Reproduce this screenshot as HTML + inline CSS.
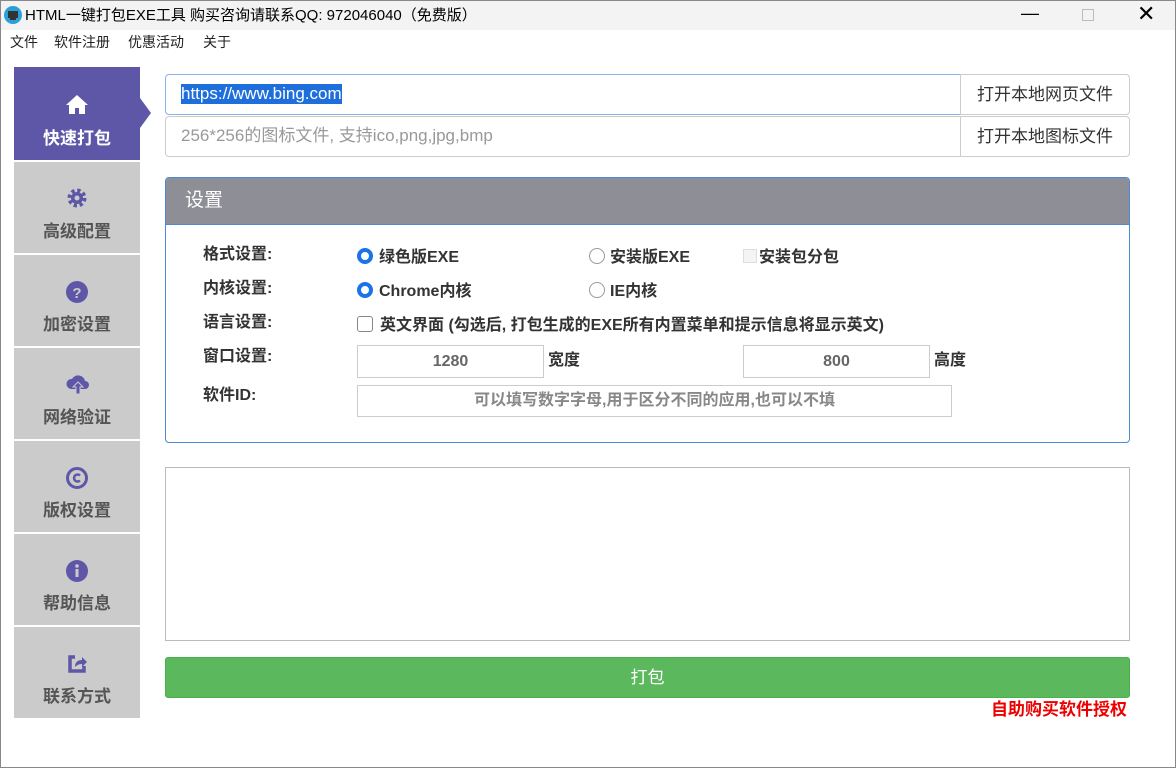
<!DOCTYPE html>
<html><head><meta charset="utf-8"><style>
*{box-sizing:border-box;margin:0;padding:0}
body{width:1176px;height:768px;background:#fff;font-family:"Liberation Sans","Noto Sans CJK SC",sans-serif;position:relative;overflow:hidden;line-height:20px}
.a{position:absolute}
.title{left:0;top:0;width:1176px;height:30px;background:#f3f3f3;font-size:15px;color:#000}
.menu{top:32px;font-size:14px;color:#222}
.side{left:14px;width:126px;background:#cbcbcb;text-align:center;color:#555;font-weight:bold;font-size:17px}
.side .lab{position:absolute;left:0;right:0;bottom:11px}
.side svg{position:absolute;left:51px;top:25px}
.inp{border:1px solid #ccc;background:#fff}
.btn{border:1px solid #ccc;background:#fff;font-size:17px;color:#333;text-align:center;line-height:40px}
.lbl{font-size:16px;font-weight:bold;color:#333}
.radio{width:16px;height:16px;border-radius:50%;border:1px solid #999;background:#fff}
.radio.on{border:4px solid #1a73e8;background:#fff}
.opt{font-size:16px;font-weight:bold;color:#333}
</style></head><body>
<div class="a" style="left:0;top:0;width:1176px;height:768px;border:1px solid #888;z-index:5;pointer-events:none"></div>
<div class="a title">
<svg class="a" style="left:4px;top:6px" width="18" height="18"><circle cx="9" cy="9" r="9" fill="#2a9fd8"/><rect x="4" y="5" width="10" height="7" fill="#333"/><rect x="6" y="12" width="6" height="2" fill="#333"/></svg>
<span class="a" style="left:25px;top:6px">HTML一键打包EXE工具 购买咨询请联系QQ: 972046040（免费版）</span>
<span class="a" style="left:1021px;top:3px;font-size:18px">—</span>
<div class="a" style="left:1082px;top:9px;width:12px;height:12px;border:1px solid #bbb"></div>
<span class="a" style="left:1137px;top:4px;font-size:22px;font-weight:300">✕</span>
</div>
<span class="a menu" style="left:10px">文件</span>
<span class="a menu" style="left:54px">软件注册</span>
<span class="a menu" style="left:128px">优惠活动</span>
<span class="a menu" style="left:203px">关于</span>

<div class="a side" style="top:67px;height:93px;background:#5e57a8;color:#fff">
<svg width="24" height="24" viewBox="0 0 24 24" style="top:26px"><path d="M12 2L1 12h3v9h6v-6h4v6h6v-9h3z" fill="#fff"/></svg>
<div class="lab">快速打包</div></div>
<div class="a" style="left:140px;top:98px;width:0;height:0;border-top:15px solid transparent;border-bottom:15px solid transparent;border-left:11px solid #5e57a8"></div>

<div class="a side" style="top:162px;height:91px"><svg width="24" height="24" viewBox="0 0 24 24" style="top:24px"><circle cx="12" cy="12" r="7" fill="none" stroke="#5e57a8" stroke-width="5" stroke-dasharray="3 2.5"/><circle cx="12" cy="12" r="6" fill="#5e57a8"/><circle cx="12" cy="12" r="2.5" fill="#cbcbcb"/></svg><div class="lab">高级配置</div></div>
<div class="a side" style="top:255px;height:91px"><svg width="24" height="24" viewBox="0 0 24 24"><circle cx="12" cy="12" r="11" fill="#5e57a8"/><text x="12" y="18" font-size="15" font-weight="bold" fill="#cbcbcb" text-anchor="middle" font-family="Liberation Sans">?</text></svg><div class="lab">加密设置</div></div>
<div class="a side" style="top:348px;height:91px"><svg width="26" height="24" viewBox="0 0 26 24"><path d="M6 16a5 5 0 0 1 1-10 7 7 0 0 1 13 2 4 4 0 0 1 0 8z" fill="#5e57a8"/><path d="M13 9l-5 5h3v7h4v-7h3z" fill="#5e57a8" stroke="#cbcbcb" stroke-width="1"/></svg><div class="lab">网络验证</div></div>
<div class="a side" style="top:441px;height:91px"><svg width="24" height="24" viewBox="0 0 24 24"><circle cx="12" cy="12" r="9.5" fill="none" stroke="#5e57a8" stroke-width="3"/><path d="M15 9.5a3.5 3.5 0 1 0 0 5" fill="none" stroke="#5e57a8" stroke-width="2.5"/></svg><div class="lab">版权设置</div></div>
<div class="a side" style="top:534px;height:91px"><svg width="24" height="24" viewBox="0 0 24 24"><circle cx="12" cy="12" r="11" fill="#5e57a8"/><rect x="10.5" y="10" width="3" height="8" fill="#cbcbcb"/><circle cx="12" cy="7" r="1.8" fill="#cbcbcb"/></svg><div class="lab">帮助信息</div></div>
<div class="a side" style="top:627px;height:91px"><svg width="24" height="24" viewBox="0 0 24 24"><path d="M10 5H5v14h14v-5" fill="none" stroke="#5e57a8" stroke-width="3.5"/><path d="M10 15c0-5 3-7 7-7V5l5 5-5 5v-3c-3 0-5 1-7 3z" fill="#5e57a8"/></svg><div class="lab">联系方式</div></div>

<div class="a inp" style="left:165px;top:74px;width:796px;height:41px;border:1px solid #8ab4e8;border-radius:4px 0 0 4px"><span class="a" style="left:15px;top:9px;font-size:17px;background:#1e6fdc;color:#fff;line-height:20px">https://www.bing.com</span></div>
<div class="a btn" style="left:960px;top:74px;width:170px;height:41px;border-radius:0 4px 4px 0">打开本地网页文件</div>
<div class="a inp" style="left:165px;top:116px;width:796px;height:41px;border-radius:4px 0 0 4px"><span class="a" style="left:15px;top:9px;font-size:17px;color:#999">256*256的图标文件, 支持ico,png,jpg,bmp</span></div>
<div class="a btn" style="left:960px;top:116px;width:170px;height:41px;border-radius:0 4px 4px 0">打开本地图标文件</div>

<div class="a" style="left:165px;top:177px;width:965px;height:266px;border:1px solid #4a8ad6;border-radius:4px;overflow:hidden">
<div style="height:47px;background:#8e8e96;border-bottom:1px solid #4a8ad6;color:#fff;font-size:19px;line-height:46px;padding-left:19px">设置</div>
</div>
<span class="a lbl" style="left:203px;top:245px">格式设置:</span>
<span class="a lbl" style="left:203px;top:279px">内核设置:</span>
<span class="a lbl" style="left:203px;top:313px">语言设置:</span>
<span class="a lbl" style="left:203px;top:347px">窗口设置:</span>
<span class="a lbl" style="left:203px;top:386px">软件ID:</span>
<div class="a radio on" style="left:357px;top:248px"></div><span class="a opt" style="left:379px;top:248px">绿色版EXE</span>
<div class="a radio" style="left:589px;top:248px"></div><span class="a opt" style="left:610px;top:248px">安装版EXE</span>
<div class="a" style="left:743px;top:249px;width:14px;height:14px;border:1px solid #ddd;background:#f4f4f4"></div><span class="a opt" style="left:759px;top:248px">安装包分包</span>
<div class="a radio on" style="left:357px;top:282px"></div><span class="a opt" style="left:379px;top:282px">Chrome内核</span>
<div class="a radio" style="left:589px;top:282px"></div><span class="a opt" style="left:610px;top:282px">IE内核</span>
<div class="a" style="left:357px;top:316px;width:16px;height:16px;border:1px solid #888;border-radius:3px"></div><span class="a opt" style="left:380px;top:316px">英文界面 (勾选后, 打包生成的EXE所有内置菜单和提示信息将显示英文)</span>
<div class="a inp" style="left:357px;top:345px;width:187px;height:33px;text-align:center;line-height:31px;color:#666;font-weight:bold;font-size:16px">1280</div><span class="a opt" style="left:548px;top:351px">宽度</span>
<div class="a inp" style="left:743px;top:345px;width:187px;height:33px;text-align:center;line-height:31px;color:#666;font-weight:bold;font-size:16px">800</div><span class="a opt" style="left:934px;top:351px">高度</span>
<div class="a inp" style="left:357px;top:385px;width:595px;height:32px;text-align:center;line-height:30px;color:#888;font-weight:bold;font-size:16px">可以填写数字字母,用于区分不同的应用,也可以不填</div>

<div class="a inp" style="left:165px;top:467px;width:965px;height:174px;border-color:#bbb"></div>
<div class="a" style="left:165px;top:657px;width:965px;height:41px;background:#5cb85c;border:1px solid #4cae4c;border-radius:3px;color:#fff;text-align:center;line-height:39px;font-size:17px">打包</div>
<span class="a" style="left:991px;top:700px;color:#e00;font-weight:bold;font-size:17px">自助购买软件授权</span>
</body></html>
